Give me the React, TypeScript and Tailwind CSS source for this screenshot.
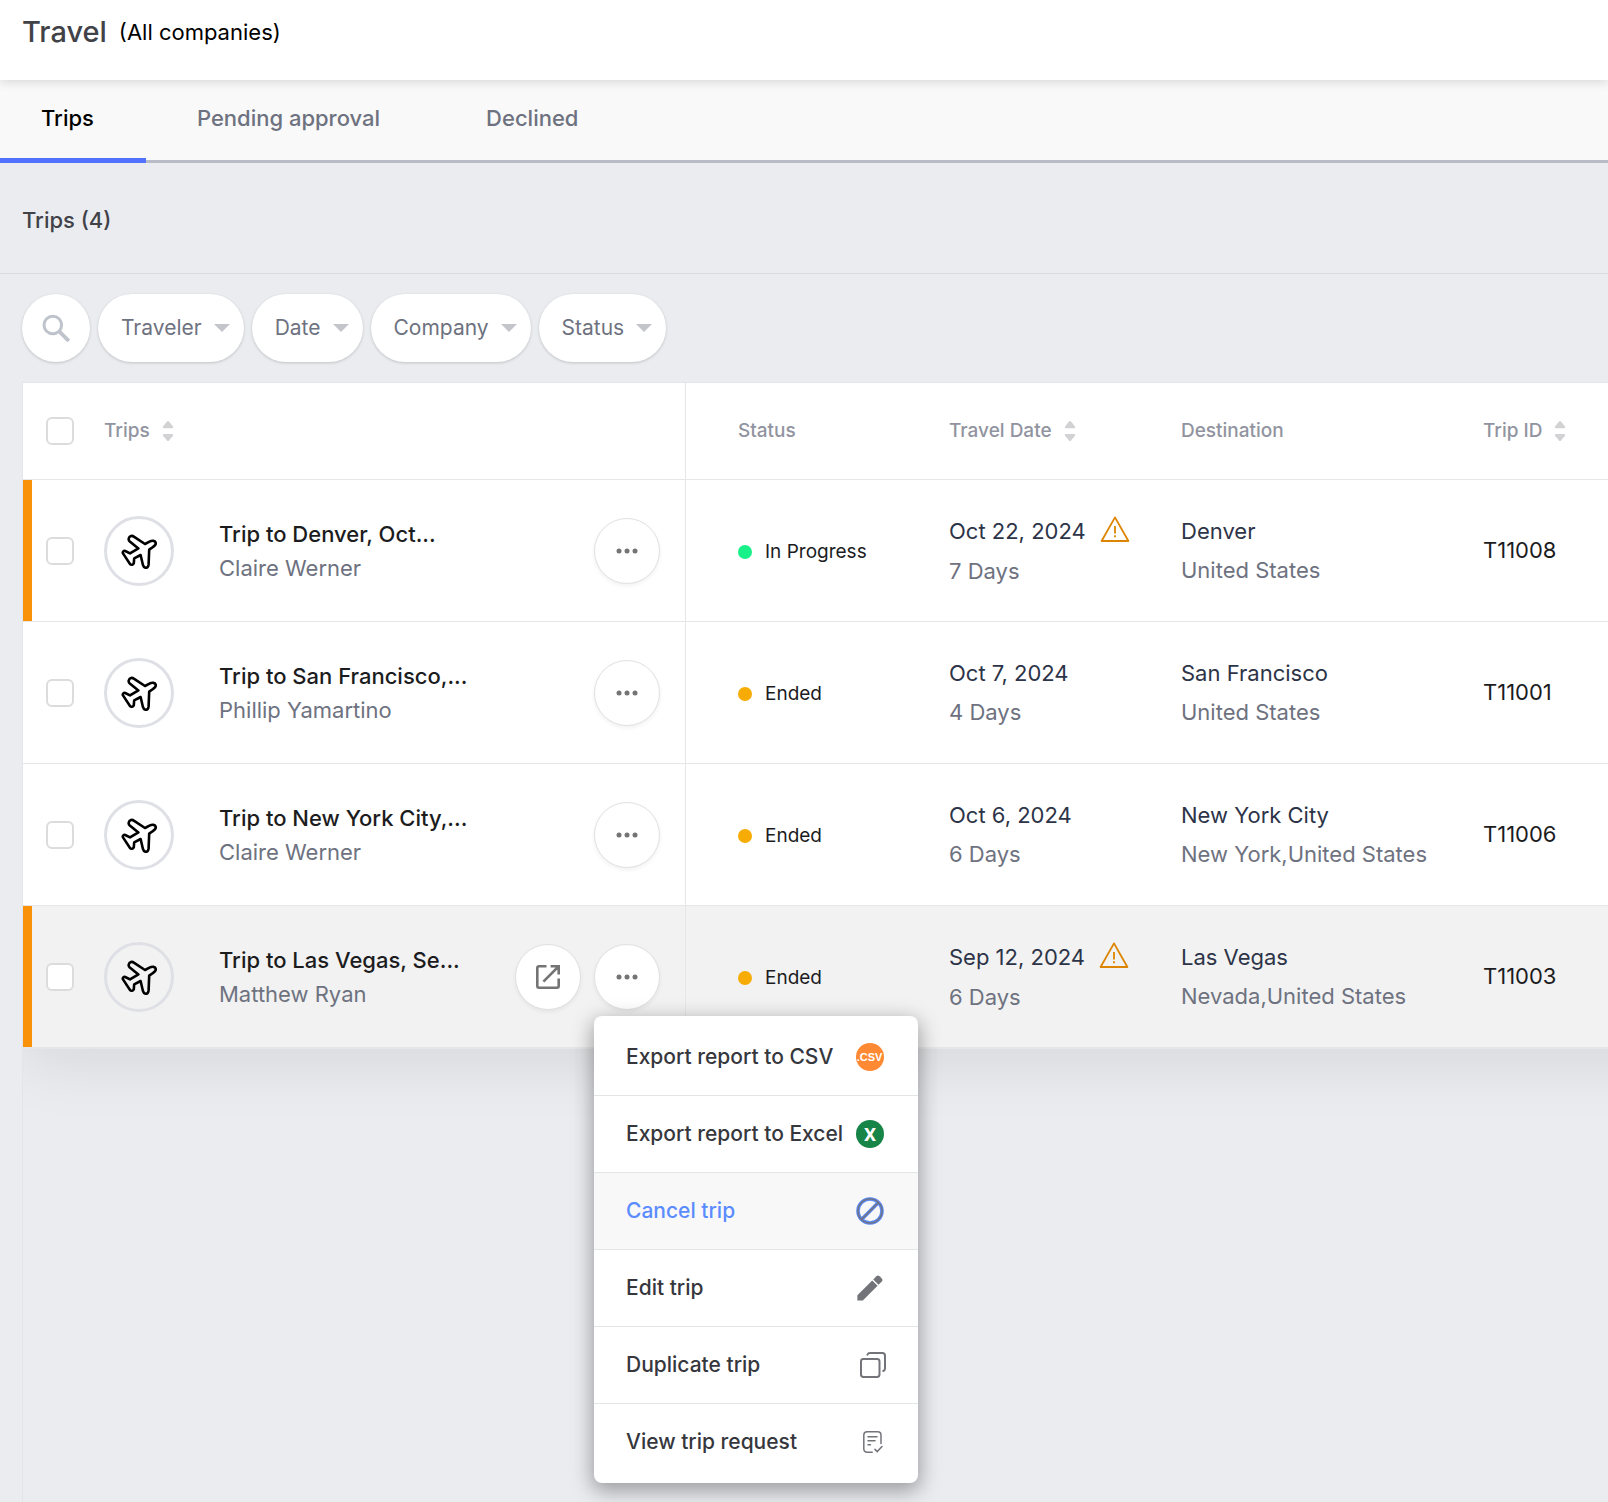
import { Fragment, type ReactNode } from 'react';

type TripStatus = 'In Progress' | 'Ended';

interface Trip {
  id: string;
  title: string;
  traveler: string;
  status: TripStatus;
  date: string;
  days: string;
  city: string;
  region: string;
  flagged?: boolean;
  active?: boolean;
}

const trips: Trip[] = [
  {
    id: 'T11008',
    title: 'Trip to Denver, Oct...',
    traveler: 'Claire Werner',
    status: 'In Progress',
    date: 'Oct 22, 2024',
    days: '7 Days',
    city: 'Denver',
    region: 'United States',
    flagged: true
  },
  {
    id: 'T11001',
    title: 'Trip to San Francisco,...',
    traveler: 'Phillip Yamartino',
    status: 'Ended',
    date: 'Oct 7, 2024',
    days: '4 Days',
    city: 'San Francisco',
    region: 'United States'
  },
  {
    id: 'T11006',
    title: 'Trip to New York City,...',
    traveler: 'Claire Werner',
    status: 'Ended',
    date: 'Oct 6, 2024',
    days: '6 Days',
    city: 'New York City',
    region: 'New York,United States'
  },
  {
    id: 'T11003',
    title: 'Trip to Las Vegas, Se...',
    traveler: 'Matthew Ryan',
    status: 'Ended',
    date: 'Sep 12, 2024',
    days: '6 Days',
    city: 'Las Vegas',
    region: 'Nevada,United States',
    flagged: true,
    active: true
  }
];

const tabs = ['Trips', 'Pending approval', 'Declined'];
const filters = ['Traveler', 'Date', 'Company', 'Status'];

function PlaneIcon() {
  return (
    <svg width="36" height="36" viewBox="0 0 36 36" fill="none" stroke="#000" strokeWidth="2.6" strokeLinejoin="round" strokeLinecap="round">
      <path d="M17.4 15.4 L8.8 8.6 C6.8 6.8 7.6 3.8 10 3 C11 2.8 12 3 12.8 3.6 L24 11 L29 8.4 C31 7.4 34 7.6 34.6 9.4 C35.2 11.4 33.8 13 32 14 L28.2 16.6 L27.6 31.4 C27.4 33.2 26.6 34.8 25 34.8 C23.4 34.8 22.4 33.6 22 32.2 L19.6 22 L13.2 25.4 L12.8 30.2 C12.2 31.8 10 32.4 9 31 L2 20.4 C1.2 18.6 2.8 17.6 4.2 18 L9 20.4 Z" />
    </svg>
  );
}

function SortIcon() {
  return (
    <svg width="12" height="20" viewBox="0 0 12 20" fill="#d2d2d4">
      <path d="M5 .6 Q6-.4 7 .6 L11 5.4 Q11.6 7.2 10 7.2 H2 Q.4 7.2 1 5.4 Z" />
      <path d="M5 19.4 Q6 20.4 7 19.4 L11 14.8 Q11.6 13 10 13 H2 Q.4 13 1 14.8 Z" />
    </svg>
  );
}

function WarningIcon() {
  return (
    <svg width="30" height="30" viewBox="0 0 30 30" fill="none" stroke="#dd8500" className="shrink-0">
      <path d="M15 1.4 L28.4 25 H1.6 Z" strokeWidth="1.8" strokeLinejoin="round" />
      <path d="M15 10 V17.4" strokeWidth="1.8" />
      <path d="M15 19.2 V21.2" strokeWidth="1.8" />
    </svg>
  );
}

function CsvIcon() {
  return (
    <svg width="28" height="28" viewBox="0 0 28 28">
      <circle cx="14" cy="14" r="14" fill="#ff8a33" />
      <text x="13.5" y="18" textAnchor="middle" fontFamily="Liberation Sans, Arial, sans-serif" fontSize="11" fontWeight="700" fill="#fff">
        .CSV
      </text>
    </svg>
  );
}

function ExcelIcon() {
  return (
    <svg width="28" height="28" viewBox="0 0 28 28">
      <circle cx="14" cy="14" r="14" fill="#168547" />
      <text x="14" y="20.5" textAnchor="middle" fontFamily="Roboto, sans-serif" fontSize="19" fontWeight="700" fill="#fff">
        X
      </text>
    </svg>
  );
}

function CancelIcon() {
  return (
    <svg width="28" height="28" viewBox="0 0 28 28" fill="none">
      <g stroke="#5b8af5" strokeWidth="3.6">
        <circle cx="14" cy="14" r="12" />
        <path d="M22.4 5.6 L5.6 22.4" />
      </g>
      <g stroke="#6e7487" strokeWidth="1.6">
        <circle cx="14" cy="14" r="12" />
        <path d="M22.4 5.6 L5.6 22.4" />
      </g>
    </svg>
  );
}

function PencilIcon() {
  return (
    <svg width="26" height="26" viewBox="0 0 26 26" fill="#737479">
      <path d="M.4 20.2 L15.2 5.4 L20.6 10.8 L5.8 25.6 H.4 Z" />
      <path d="M16.2 4.4 L19.4 1.2 Q21 -.2 22.6 1.2 L24.8 3.4 Q26.2 5 24.8 6.6 L21.6 9.8 Z" />
    </svg>
  );
}

function DuplicateIcon() {
  return (
    <svg width="32" height="26" viewBox="-6 0 32 26" fill="none" stroke="#737479" strokeWidth="2" strokeLinecap="round">
      <rect x="1" y="7" width="18.5" height="18" rx="2.4" />
      <path d="M7.4 2.6 Q8.2 1 10 1 H22.4 Q25 1 25 3.6 V16.4 Q25 18.4 23.2 19" />
    </svg>
  );
}

function RequestIcon() {
  return (
    <svg width="26" height="22" viewBox="-6 0 26 22" fill="none" stroke="#737479" strokeWidth="1.5" strokeLinecap="round">
      <path d="M18 12.4 V4.2 Q18 .8 14.6 .8 H4.2 Q.8 .8 .8 4.2 V17.8 Q.8 21.2 4.2 21.2 H9.2" />
      <path d="M5 5.8 H14 M5 9.8 H12 M5 13.8 H7.4" />
      <path d="M12 18.4 L14.2 20.6 L19 15.6" />
    </svg>
  );
}

const menuItems: Array<{ label: string; icon: ReactNode; highlighted?: boolean }> = [
  { label: 'Export report to CSV', icon: <CsvIcon /> },
  { label: 'Export report to Excel', icon: <ExcelIcon /> },
  { label: 'Cancel trip', icon: <CancelIcon />, highlighted: true },
  { label: 'Edit trip', icon: <PencilIcon /> },
  { label: 'Duplicate trip', icon: <DuplicateIcon /> },
  { label: 'View trip request', icon: <RequestIcon /> }
];

function ActionMenu() {
  return (
    <div
      role="menu"
      className="absolute left-0 top-full z-20 mt-1.5 w-[324px] overflow-hidden rounded-lg bg-white py-[3px] shadow-[0_6px_20px_2px_rgba(0,0,0,0.34)]"
    >
      {menuItems.map((item, i) => (
        <Fragment key={item.label}>
          {i > 0 && <div className="h-px bg-[#e4e5e7]" />}
          <button
            type="button"
            role="menuitem"
            className={`flex h-[76px] w-full items-center justify-between pl-8 pr-8 text-left text-[21px] font-medium ${
              item.highlighted ? 'bg-[#f8f8f9] text-[#5b8cff]' : 'text-[#36373d]'
            }`}
          >
            {item.label}
            <span className="flex w-8 items-center justify-center">{item.icon}</span>
          </button>
        </Fragment>
      ))}
    </div>
  );
}

function Checkbox({ label }: { label: string }) {
  return (
    <input
      type="checkbox"
      aria-label={label}
      className="block size-7 shrink-0 appearance-none rounded-md border-2 border-[#dcdcde] bg-white"
    />
  );
}

function RoundButton({ label, children }: { label: string; children: ReactNode }) {
  return (
    <button
      type="button"
      aria-label={label}
      className="flex size-[66px] items-center justify-center rounded-full border border-[#e1e1e4] bg-white shadow-[0_2px_4px_rgba(0,0,0,0.06)]"
    >
      {children}
    </button>
  );
}

function TripRow({ trip }: { trip: Trip }) {
  return (
    <tr className={`h-[142px] ${trip.active ? 'bg-[#f2f2f2]' : 'bg-white'}`}>
      <td
        className={`border-b border-r border-[#e6e6e8] p-0 ${trip.flagged ? 'shadow-[inset_9px_0_0_#f99209]' : ''}`}
      >
        <div className="flex items-center pl-[23px] pr-[25px]">
          <Checkbox label={`Select ${trip.title}`} />
          <div className="ml-[30px] flex size-[70px] shrink-0 items-center justify-center rounded-full border-[3px] border-[#dfe0e6]">
            <PlaneIcon />
          </div>
          <div className="ml-[45px] min-w-0 flex-1 text-[22px] leading-[34px]">
            <p className="font-medium text-[#1c1c1e]">{trip.title}</p>
            <p className="text-[#6e7280]">{trip.traveler}</p>
          </div>
          <div className="flex gap-[13px]">
            {trip.active && (
              <RoundButton label="Open trip">
                <svg width="24" height="24" viewBox="0 0 24 24" fill="none" stroke="#747474" strokeWidth="2.6">
                  <path d="M10.5 1.3 H3 Q1.3 1.3 1.3 3 V21 Q1.3 22.7 3 22.7 H21 Q22.7 22.7 22.7 21 V13.5" />
                  <path d="M14.6 1.3 H22.7 V9.4 M22 2 L7.4 16.6" />
                </svg>
              </RoundButton>
            )}
            <div className="relative">
              <RoundButton label="More actions">
                <svg width="22" height="6" viewBox="0 0 22 6" fill="#747474">
                  <circle cx="3" cy="3" r="2.5" />
                  <circle cx="11" cy="3" r="2.5" />
                  <circle cx="19" cy="3" r="2.5" />
                </svg>
              </RoundButton>
              {trip.active && <ActionMenu />}
            </div>
          </div>
        </div>
      </td>
      <td className="border-b border-[#e6e6e8] pl-[52px] pt-[3px] text-[19px] text-[#1c1c1e]">
        <div className="flex items-center gap-[13px]">
          <span
            className={`size-[14px] rounded-full ${trip.status === 'In Progress' ? 'bg-[#18f089]' : 'bg-[#f6ac04]'}`}
          />
          {trip.status}
        </div>
      </td>
      <td className="whitespace-nowrap border-b border-[#e6e6e8] pl-[52px] text-[22px] leading-[39px]">
        <div className={`flex items-center gap-[14px] text-[#2d3448] ${trip.flagged ? 'h-[41px]' : ''}`}>
          {trip.date}
          {trip.flagged && <WarningIcon />}
        </div>
        <p className="text-[#6e7280]">{trip.days}</p>
      </td>
      <td className="border-b border-[#e6e6e8] pl-[52px] text-[22px] leading-[39px]">
        <p className="text-[#2d3448]">{trip.city}</p>
        <p className="text-[#6e7280]">{trip.region}</p>
      </td>
      <td className="border-b border-[#e6e6e8] pl-[52px] text-[22px] text-[#1c1c1e]">{trip.id}</td>
    </tr>
  );
}

function HeaderCell({ label, sortable }: { label: string; sortable?: boolean }) {
  return (
    <th className="border-b border-[#e6e6e8] pl-[52px] text-left font-medium">
      <div className="flex items-center gap-3">
        {label}
        {sortable && <SortIcon />}
      </div>
    </th>
  );
}

export default function App() {
  return (
    <div className="flex min-h-screen flex-col bg-[#ebecf0] font-['Inter',sans-serif]">
      <header className="relative z-10 flex h-20 gap-3 bg-white pl-[22px] pt-3 leading-10 shadow-[0_2px_10px_rgba(0,0,0,0.14)]">
        <h1 className="text-[29px] font-medium text-[#414248]">Travel</h1>
        <span className="text-[22px] text-black">(All companies)</span>
      </header>

      <nav className="flex h-[83px] items-stretch border-b-[3px] border-[#b9bcc6] bg-[#f9f9f9]">
        {tabs.map((tab, i) => (
          <a
            key={tab}
            href="#"
            className={`-mb-[3px] flex items-start pt-[22px] text-[22px] font-medium leading-8 ${
              i === 0 ? 'border-b-[5px] border-[#5271ff] pl-[41px] pr-[52px] text-black' : 'pl-[51px] pr-[55px] text-[#6e7280]'
            }`}
          >
            {tab}
          </a>
        ))}
      </nav>

      <div className="flex h-[111px] items-center border-b border-[#d9dade] pl-[22px] pt-1">
        <h2 className="text-[22px] font-medium text-[#414248]">Trips (4)</h2>
      </div>

      <div className="flex h-[108px] items-center gap-2 pl-[22px]">
        <button
          type="button"
          aria-label="Search"
          className="flex size-[68px] items-center justify-center rounded-full bg-white shadow-[0_1px_3px_rgba(0,0,0,0.18)]"
        >
          <svg width="28" height="28" viewBox="0 0 28 28" fill="none" stroke="#bfc3cc" strokeWidth="3">
            <circle cx="10.8" cy="11" r="8.8" />
            <path d="M17.2 17.4 L26.8 27" strokeWidth="3.8" />
          </svg>
        </button>
        {filters.map((filter) => (
          <button
            key={filter}
            type="button"
            className="flex h-[68px] items-center gap-3 rounded-full bg-white pl-[23px] pr-[14px] text-[21px] text-[#6e7280] shadow-[0_1px_3px_rgba(0,0,0,0.18)]"
          >
            {filter}
            <svg width="16" height="8" viewBox="0 0 16 8" fill="#c4c5cb">
              <path d="M0 0 H16 L8 8 Z" />
            </svg>
          </button>
        ))}
      </div>

      <main className="flex flex-1 flex-col pl-[22px]">
        {/* the table is wider than the window, the pane crops it */}
        <div className="flex-1 overflow-hidden border-l border-t border-[#e4e5e8]">
          <table className="w-full min-w-[1700px] table-fixed border-separate border-spacing-0 shadow-[0_1px_0_#e6e6e8,0_14px_60px_rgba(0,0,0,0.09)]">
            <colgroup>
              <col className="w-[663px]" />
              <col className="w-[211px]" />
              <col className="w-[232px]" />
              <col className="w-[302px]" />
              <col />
            </colgroup>
            <thead>
              <tr className="h-[97px] bg-white text-[19px] text-[#9194a0]">
                <th className="border-b border-r border-[#e6e6e8] p-0 text-left font-medium">
                  <div className="flex items-center pl-[23px]">
                    <Checkbox label="Select all trips" />
                    <span className="ml-[30px] mr-3">Trips</span>
                    <SortIcon />
                  </div>
                </th>
                <HeaderCell label="Status" />
                <HeaderCell label="Travel Date" sortable />
                <HeaderCell label="Destination" />
                <HeaderCell label="Trip ID" sortable />
              </tr>
            </thead>
            <tbody>
              {trips.map((trip) => (
                <TripRow key={trip.id} trip={trip} />
              ))}
            </tbody>
          </table>
        </div>
      </main>
    </div>
  );
}
